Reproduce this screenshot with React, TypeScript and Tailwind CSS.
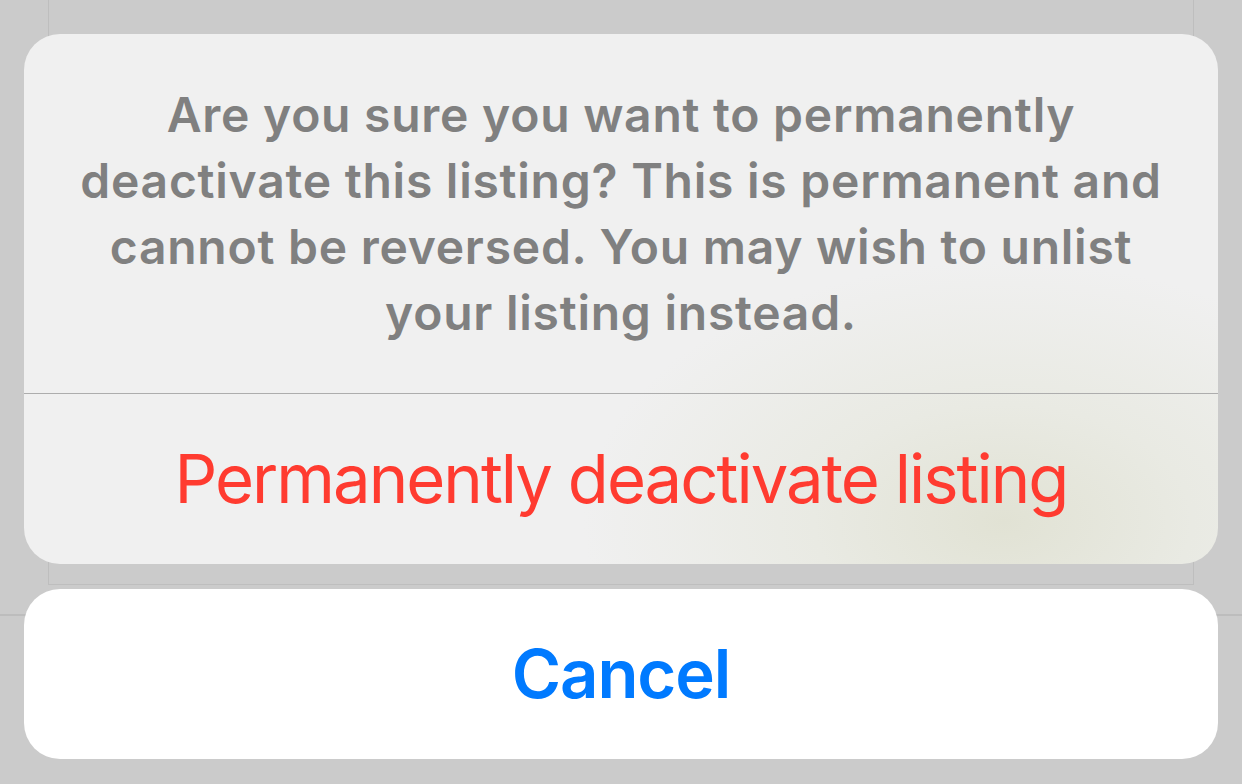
export default function App() {
  return (
    <div className="relative h-[784px] w-[1242px] overflow-hidden bg-[#cbcbcb] font-['Inter','Noto_Sans',sans-serif]">
      {/* page underneath the sheet */}
      <div className="ml-[48px] h-[585px] w-[1146px] border-x border-b border-[#bebebe] bg-[#cbcbcb]" />
      <div className="mt-[29px] border-t-2 border-[#bdbdbd]" />

      {/* action sheet */}
      <div className="absolute inset-0 flex flex-col gap-[25px] px-[24px] pt-[34px]">
        <div className="flex h-[530px] flex-col overflow-hidden rounded-[36px] bg-[radial-gradient(ellipse_420px_260px_at_82%_92%,#e1e2d4_0%,#e9eae3_45%,#f0f0f0_100%)]">
          <div className="flex h-[359px] shrink-0 items-center justify-center px-[20px]">
            <p className="whitespace-nowrap text-center text-[48px] font-semibold leading-[66px] tracking-[0.75px] text-[#808080]">
              Are you sure you want to permanently
              <br />
              deactivate this listing? This is permanent and
              <br />
              cannot be reversed. You may wish to unlist
              <br />
              your listing instead.
            </p>
          </div>
          <div className="h-px shrink-0 bg-[#adadad]" />
          <button className="flex flex-1 items-center justify-center text-[67px] font-normal tracking-[-2px] text-[#ff3b30]">
            Permanently deactivate listing
          </button>
        </div>
        <button className="flex h-[170px] items-center justify-center rounded-[36px] bg-white text-[67px] font-semibold tracking-[-1.1px] text-[#007aff]">
          Cancel
        </button>
      </div>
    </div>
  );
}
